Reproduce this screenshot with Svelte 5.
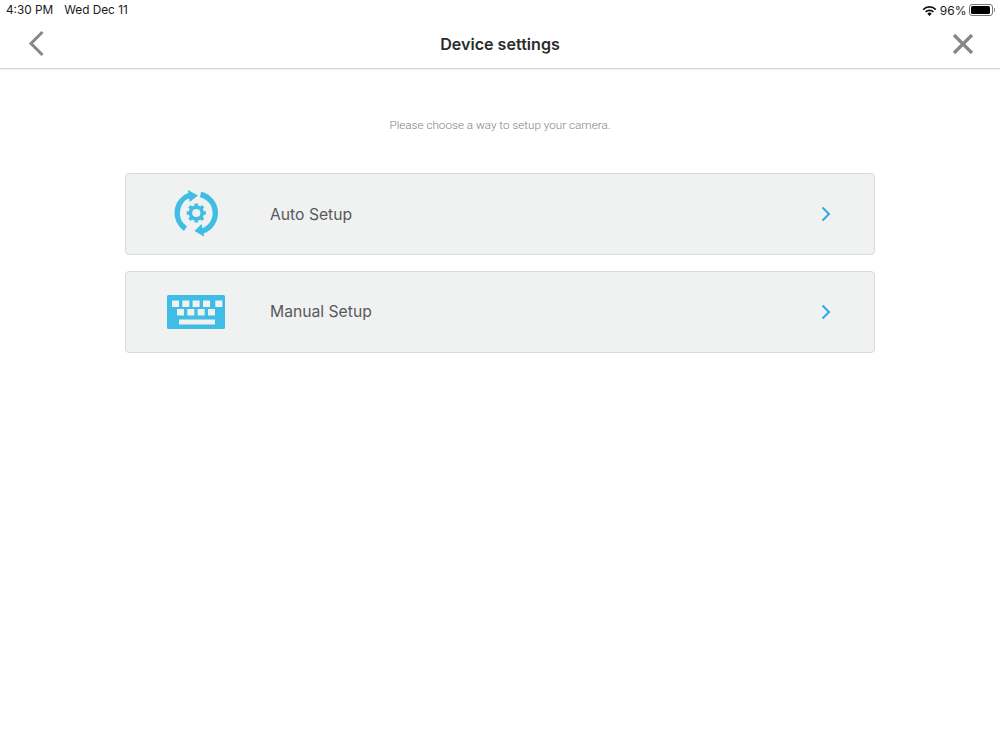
<script>
  const options = [
    { label: 'Auto Setup', icon: 'auto' },
    { label: 'Manual Setup', icon: 'keyboard' }
  ];
  const topKeys = [6, 16.3, 26.6, 37, 49.3];
  const midKeys = [11, 21.3, 31.6, 42];
</script>

<div class="screen">
  <div class="status">
    <div class="time"><span>4:30 PM</span><span>Wed Dec 11</span></div>
    <div class="system">
      <svg width="15" height="11" viewBox="0 0 15 11">
        <path d="M0.6 3.9a9.8 9.8 0 0 1 13.8 0l-1.2 1.3a8 8 0 0 0-11.4 0z" fill="#111" />
        <path d="M3 6.3a6.4 6.4 0 0 1 9 0l-1.2 1.3a4.7 4.7 0 0 0-6.6 0z" fill="#111" />
        <path d="M5.3 8.7a3.1 3.1 0 0 1 4.4 0l-2.2 2.2z" fill="#111" />
      </svg>
      <span>96%</span>
      <div class="battery"><div class="charge"></div></div>
      <div class="nub"></div>
    </div>
  </div>

  <header>
    <button class="nav back" aria-label="Back">
      <svg width="20" height="30" viewBox="0 0 20 30">
        <path d="M15.5 3 4 14.5 15.5 26" fill="none" stroke="#858789" stroke-width="3" />
      </svg>
    </button>
    <h1>Device settings</h1>
    <button class="nav" aria-label="Close">
      <svg width="24" height="24" viewBox="0 0 24 24">
        <path d="M3 3l18 18M21 3 3 21" fill="none" stroke="#858789" stroke-width="3.2" />
      </svg>
    </button>
  </header>

  <main>
    <p>Please choose a way to setup your camera.</p>
    <div class="list">
      {#each options as option}
        <div class="card">
          <div class="icon">
            {#if option.icon === 'auto'}
              <svg width="62" height="60" viewBox="0 0 62 60">
                <g fill="none" stroke="#3fbde5" stroke-width="5.4">
                  <path d="M20.5 44.7A19 19 0 0 1 25 11" />
                  <path d="M35.5 10.5A19 19 0 0 1 37.5 47" />
                </g>
                <path d="M23 6 33 11.5l-8.3 6.5z" fill="#3fbde5" />
                <path d="M39.3 52.7 29.5 47l7-7z" fill="#3fbde5" />
                <g stroke="#3fbde5" stroke-width="3.4">
                  <path d="M31.3 19.4v19.2M21.7 29h19.2M24.5 22.2l13.6 13.6M38.1 22.2 24.5 35.8" />
                </g>
                <circle cx="31.3" cy="29" r="5.9" fill="#f0f2f2" stroke="#3fbde5" stroke-width="3.6" />
              </svg>
            {:else}
              <svg width="60" height="36" viewBox="0 0 60 36">
                <rect x="1" y="1" width="58" height="34" rx="1.5" fill="#3fbde5" />
                {#each topKeys as x}
                  <rect {x} y="6.5" width="7" height="6.5" fill="#f0f2f2" />
                {/each}
                {#each midKeys as x}
                  <rect {x} y="15" width="7" height="6.5" fill="#f0f2f2" />
                {/each}
                <rect x="13" y="25.5" width="36" height="5" fill="#f0f2f2" />
              </svg>
            {/if}
          </div>
          <span class="label">{option.label}</span>
          <svg class="chevron" width="10" height="16" viewBox="0 0 10 16">
            <path d="M1.5 1.5 8 8l-6.5 6.5" fill="none" stroke="#2ea9e4" stroke-width="2" />
          </svg>
        </div>
      {/each}
    </div>
  </main>
</div>

<style>
  :global(body) {
    margin: 0;
    background: #fff;
  }

  .screen {
    width: 1000px;
    height: 750px;
    background: #fff;
    font-family: Inter, "Liberation Sans", sans-serif;
    overflow: hidden;
  }

  .status {
    height: 20px;
    padding: 0 5px 0 6px;
    display: flex;
    align-items: center;
    justify-content: space-between;
    font-size: 11.8px;
    color: #1a1a1a;
  }

  .time {
    display: flex;
    gap: 11px;
  }

  .system {
    display: flex;
    align-items: center;
    gap: 3px;
  }

  .system span {
    font-size: 12px;
  }

  .battery {
    width: 24px;
    height: 12px;
    box-sizing: border-box;
    border: 1px solid #777;
    border-radius: 3px;
    padding: 1px;
    margin: 0 -2px 0 -1px;
  }

  .charge {
    width: 95%;
    height: 100%;
    background: #000;
    border-radius: 1.5px;
  }

  .nub {
    width: 1.5px;
    height: 4px;
    background: #888;
  }

  header {
    height: 48px;
    padding: 0 25px 0 27px;
    display: flex;
    align-items: center;
    justify-content: space-between;
    border-bottom: 1px solid #d9d9d9;
    box-shadow: 0 1px 1px #f0f0f0;
  }

  h1 {
    margin: 0 0 0 2px;
    font-size: 16.1px;
    font-weight: 600;
    color: #2b2b2b;
  }

  .nav {
    padding: 0;
    border: 0;
    background: none;
    display: flex;
  }

  main {
    width: 750px;
    margin: 0 auto;
  }

  p {
    margin: 0;
    padding-top: 49px;
    height: 55px;
    line-height: 15px;
    font-family: Roboto, "Liberation Sans", sans-serif;
    font-weight: 300;
    font-size: 11.7px;
    text-align: center;
    color: #808284;
  }

  .list {
    display: flex;
    flex-direction: column;
    gap: 15.5px;
  }

  .card {
    height: 82px;
    box-sizing: border-box;
    display: flex;
    align-items: center;
    background: #f0f2f2;
    border: 1px solid #d9dbdb;
    border-radius: 4px;
  }

  .icon {
    width: 140px;
    margin-right: 4px;
    display: flex;
    justify-content: center;
  }

  .label {
    flex: 1;
    font-size: 15.7px;
    color: #58595b;
  }

  .chevron {
    margin-right: 43px;
  }
</style>
